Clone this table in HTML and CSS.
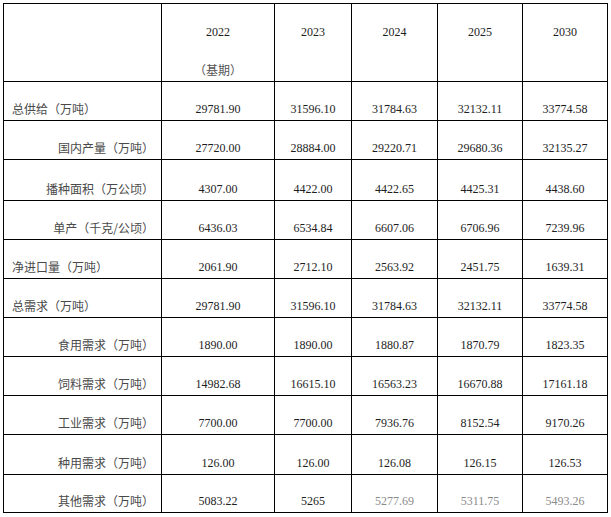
FILE: index.html
```html
<!DOCTYPE html>
<html lang="zh">
<head>
<meta charset="utf-8">
<title>玉米供需平衡表</title>
<link rel="stylesheet" href="styles.css">
</head>
<body>
<table class="grid">
  <colgroup>
    <col class="c-label">
    <col class="c-2022">
    <col class="c-2023">
    <col class="c-2024">
    <col class="c-2025">
    <col class="c-2030">
  </colgroup>
  <thead>
    <tr class="head">
      <th></th>
      <th><span class="yr">2022</span><span class="base">（基期）</span></th>
      <th><span class="yr">2023</span></th>
      <th><span class="yr">2024</span></th>
      <th><span class="yr">2025</span></th>
      <th><span class="yr">2030</span></th>
    </tr>
  </thead>
  <tbody>
    <tr><td class="lab top">总供给（万吨）</td><td>29781.90</td><td>31596.10</td><td>31784.63</td><td>32132.11</td><td>33774.58</td></tr>
    <tr><td class="lab sub">国内产量（万吨）</td><td>27720.00</td><td>28884.00</td><td>29220.71</td><td>29680.36</td><td>32135.27</td></tr>
    <tr class="tall"><td class="lab sub">播种面积（万公顷）</td><td>4307.00</td><td>4422.00</td><td>4422.65</td><td>4425.31</td><td>4438.60</td></tr>
    <tr><td class="lab sub">单产（千克/公顷）</td><td>6436.03</td><td>6534.84</td><td>6607.06</td><td>6706.96</td><td>7239.96</td></tr>
    <tr><td class="lab top">净进口量（万吨）</td><td>2061.90</td><td>2712.10</td><td>2563.92</td><td>2451.75</td><td>1639.31</td></tr>
    <tr><td class="lab top">总需求（万吨）</td><td>29781.90</td><td>31596.10</td><td>31784.63</td><td>32132.11</td><td>33774.58</td></tr>
    <tr><td class="lab sub">食用需求（万吨）</td><td>1890.00</td><td>1890.00</td><td>1880.87</td><td>1870.79</td><td>1823.35</td></tr>
    <tr><td class="lab sub">饲料需求（万吨）</td><td>14982.68</td><td>16615.10</td><td>16563.23</td><td>16670.88</td><td>17161.18</td></tr>
    <tr><td class="lab sub">工业需求（万吨）</td><td>7700.00</td><td>7700.00</td><td>7936.76</td><td>8152.54</td><td>9170.26</td></tr>
    <tr class="mid"><td class="lab sub">种用需求（万吨）</td><td>126.00</td><td>126.00</td><td>126.08</td><td>126.15</td><td>126.53</td></tr>
    <tr class="short"><td class="lab sub">其他需求（万吨）</td><td>5083.22</td><td>5265</td><td class="faded">5277.69</td><td class="faded">5311.75</td><td class="faded">5493.26</td></tr>
  </tbody>
</table>
</body>
</html>
```

FILE: styles.css
```css
html, body {
  margin: 0;
  padding: 0;
  background: #ffffff;
}

.grid {
  margin: 3px 0 0 3px;
  border-collapse: collapse;
  table-layout: fixed;
  width: 604px;
  font-family: "Liberation Serif", "Times New Roman", serif;
  font-size: 12px;
  color: #1e1e1e;
}

.c-label { width: 158px; }
.c-2022 { width: 113px; }
.c-2023 { width: 77px; }
.c-2024 { width: 86px; }
.c-2025 { width: 85px; }
.c-2030 { width: 85px; }

.grid th,
.grid td {
  border: 1px solid #000000;
  padding: 0 0 4px 0;
  line-height: 14px;
  text-align: center;
  vertical-align: bottom;
  font-weight: normal;
  white-space: nowrap;
}

.grid tbody tr { height: 39px; }
.grid tbody tr.tall { height: 41px; }
.grid tbody tr.mid { height: 40px; }
.grid tbody tr.short { height: 38px; }

.head { height: 78px; }

.head th {
  vertical-align: top;
  padding-top: 21px;
}

.yr {
  display: block;
}

.base {
  display: block;
  margin-top: 24px;
  font-family: "Noto Sans CJK SC", "Liberation Serif", sans-serif;
  color: #555555;
  font-size: 12px;
}

.lab {
  font-family: "Noto Sans CJK SC", "Liberation Serif", sans-serif;
  color: #4a4a4a;
}

.grid td.top {
  text-align: left;
  padding-left: 8px;
}

.grid td.sub {
  text-align: right;
  padding-right: 7px;
}

.grid td.faded {
  color: #8a8a8a;
}
```
